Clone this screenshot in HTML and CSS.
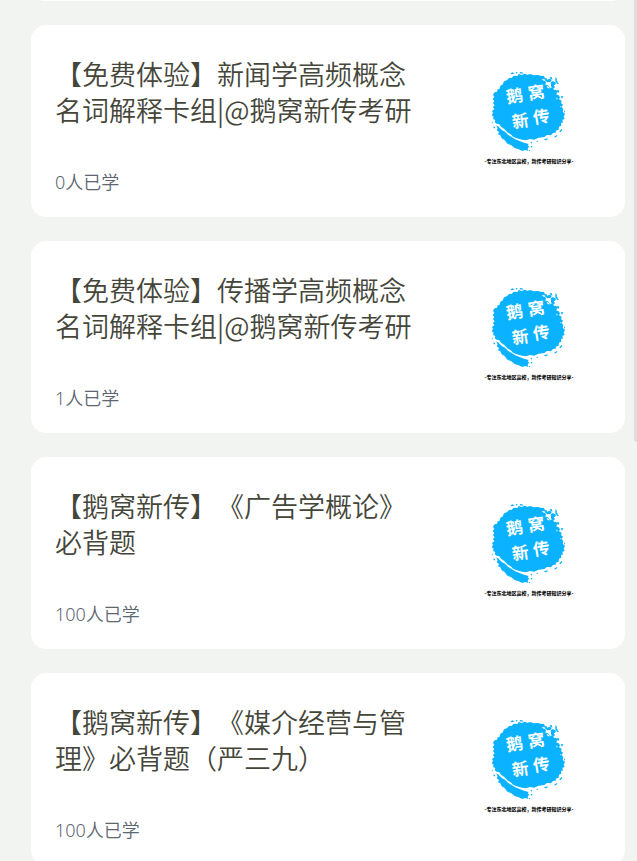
FILE: index.html
```html
<!DOCTYPE html>
<html lang="zh-CN">
<head>
<meta charset="utf-8">
<meta name="viewport" content="width=device-width, initial-scale=1">
<title>鹅窝新传</title>
<link rel="stylesheet" href="styles.css">
</head>
<body>
<svg class="sprite" aria-hidden="true">
  <symbol id="logo" viewBox="-39 -33 432 432">
    <g fill="#0ab2ff">
      <path d="M106 62L112 60L117 53L125 54L131 47L142 48L147 42L156 45L164 41L172 44L182 42L190 46L205 45L213 48L221 47L225 54L221 60L228 66L226 74L234 76L240 84L248 82L252 89L260 91L262 98L258 103L266 106L270 112L267 118L275 122L273 129L279 134L275 141L280 148L278 155L285 162L281 170L284 176L277 180L279 187L273 190L274 197L267 200L266 209L259 211L258 217L248 220L243 226L231 225L223 231L206 233L192 239L180 237L166 241L150 238L139 234L130 231L122 223L112 217L104 208L95 202L88 193L80 191L74 186L76 180L69 177L71 170L65 166L69 159L66 153L73 148L69 141L74 136L69 129L73 123L68 117L73 111L69 104L74 97L81 95L83 88L89 86L91 77L99 73L101 65Z"/>
      <path d="M78 196L86 200L94 209L105 215L114 224L126 232L136 238L149 243L162 248L176 252L173 256L178 260L173 265L175 272L165 270L157 273L146 268L135 265L124 256L112 251L104 240L95 235L91 226L84 223L87 216L80 211L83 205Z"/>
      <path d="M121 40l7-3 5 4-8 2zM137 36l6 1-3 4zM149 36l8 1 3 4-10-1zM222 55l7-1 2 5 9-3 5 5-4 5-9 1-6-5zM239 51l7 1 1 7-5-2zM242 67l7-4 9 5-2 6-5 1 4 7-7 4-5-8zM256 51l4 4 1 8 5 8-4 2-6-9zM262 89l6 3-2 6-5-2zM273 107l6 2-1 6-4-1zM282 150l4 5-3 3zM268 214l7-7 2 3-6 7zM253 230l8-5 1 3-7 5zM222 238l10-3 2 3-8 3zM198 243l6-1-1 4zM181 245l6 2-2 4zM183 257l5 2-4 5zM176 269l5 2-3 3zM71 199l4 2-1 5-4-3zM66 185l3 4-4 1z"/>
    </g>
    <g fill="#fff">
      <path d="M216 56l6 2 3 5-7-2zM230 78l7 3 1 5-6-3zM258 113l5 2-2 4zM270 137l5 3-3 2z"/>
      <g class="logo-name">
        <text x="112" y="130" transform="rotate(-9 112 130)">鹅</text>
        <text x="177" y="119" transform="rotate(-9 177 119)">窝</text>
        <text x="129" y="205" transform="rotate(-9 129 205)">新</text>
        <text x="192" y="192" transform="rotate(-9 192 192)">传</text>
      </g>
    </g>
    <text class="logo-caption" x="177" y="310">-专注东北地区高校，新传考研知识分享-</text>
  </symbol>
</svg>
<main class="list">
  <div class="list-edge"></div>
  <article class="card">
    <div class="card-body">
      <h2 class="card-title">【免费体验】新闻学高频概念名词解释卡组|@鹅窝新传考研</h2>
      <p class="card-meta">0人已学</p>
    </div>
    <svg class="card-cover" role="img" aria-label="鹅窝新传"><use href="#logo"/></svg>
  </article>
  <article class="card">
    <div class="card-body">
      <h2 class="card-title">【免费体验】传播学高频概念名词解释卡组|@鹅窝新传考研</h2>
      <p class="card-meta">1人已学</p>
    </div>
    <svg class="card-cover" role="img" aria-label="鹅窝新传"><use href="#logo"/></svg>
  </article>
  <article class="card">
    <div class="card-body">
      <h2 class="card-title">【鹅窝新传】《广告学概论》必背题</h2>
      <p class="card-meta">100人已学</p>
    </div>
    <svg class="card-cover" role="img" aria-label="鹅窝新传"><use href="#logo"/></svg>
  </article>
  <article class="card">
    <div class="card-body">
      <h2 class="card-title">【鹅窝新传】《媒介经营与管理》必背题（严三九）</h2>
      <p class="card-meta">100人已学</p>
    </div>
    <svg class="card-cover" role="img" aria-label="鹅窝新传"><use href="#logo"/></svg>
  </article>
</main>
<div class="scroll-thumb"></div>
</body>
</html>
```
FILE: styles.css
```css
* {
  box-sizing: border-box;
}

body {
  margin: 0;
  height: 100vh;
  overflow: hidden;
  background: #f2f4f1;
  font-family: "Noto Sans CJK SC", sans-serif;
  font-weight: 350;
  text-spacing-trim: space-all;
}

.sprite {
  display: none;
}

.list {
  display: flex;
  flex-direction: column;
  gap: 24px;
  padding: 0 12px 24px 31px;
}

/* Lower edge of the card that is scrolled out of view */
.list-edge {
  flex: none;
  height: 1px;
  margin: 0 10px;
  background: #fff;
}

.card {
  flex: none;
  display: flex;
  gap: 36px;
  padding: 24px;
  border-radius: 15px;
  background: #fff;
}

.card-body {
  flex: 1;
  min-width: 0;
  display: flex;
  flex-direction: column;
  justify-content: space-between;
  padding-top: 7px;
}

.card-title {
  margin: 0;
  color: #45463a;
  font-size: 27px;
  font-weight: inherit;
  line-height: 36px;
}

.card-meta {
  margin: 0;
  color: #5c6670;
  font-family: "Noto Sans", "Noto Sans CJK SC", sans-serif;
  font-size: 18px;
  line-height: 22px;
}

.card-cover {
  flex: none;
  width: 144px;
  height: 144px;
}

.logo-name {
  font-family: "Noto Sans CJK SC", sans-serif;
  font-size: 50px;
  font-weight: 700;
}

.logo-caption {
  fill: #111;
  font-family: "Noto Sans CJK SC", sans-serif;
  font-size: 15px;
  font-weight: 900;
  text-anchor: middle;
}

.scroll-thumb {
  position: fixed;
  top: 0;
  right: 0;
  width: 3px;
  height: 442px;
  border-radius: 0 0 0 3px;
  background: #dcdddc;
}
```
